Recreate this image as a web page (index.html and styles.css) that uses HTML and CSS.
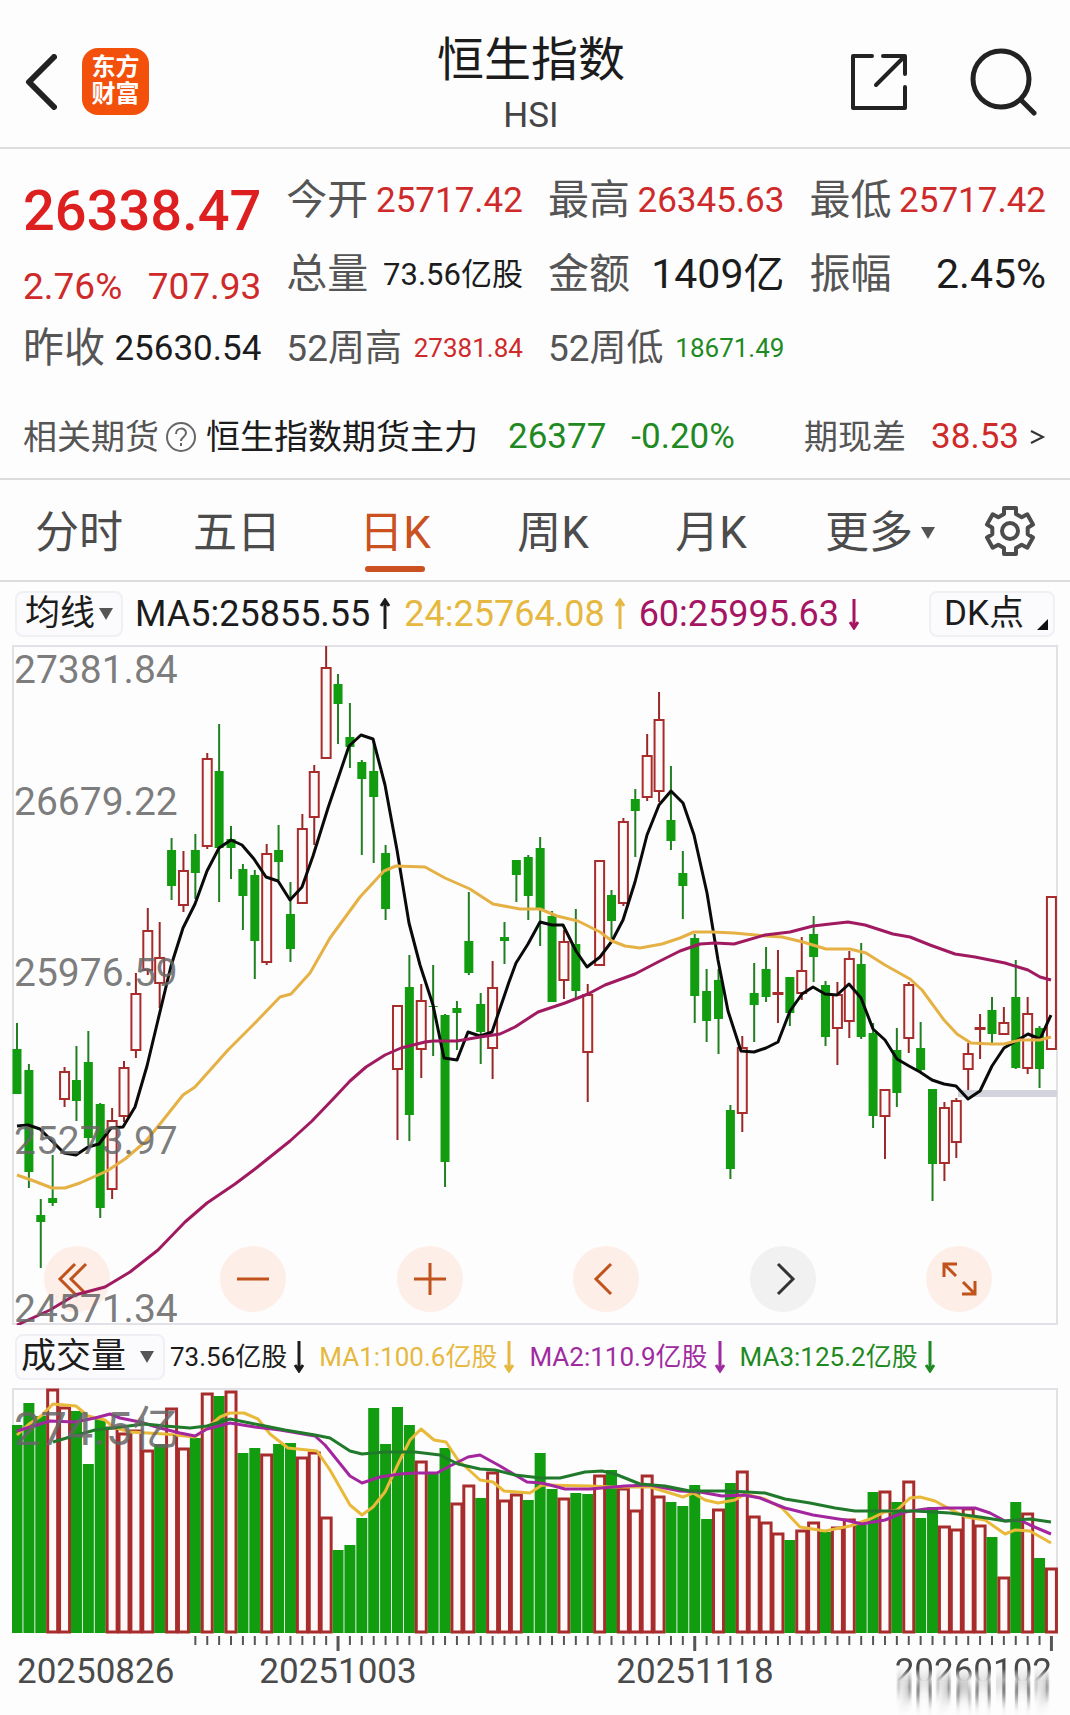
FILE: index.html
```html
<!DOCTYPE html>
<html lang="zh-CN">

<head>
    <meta charset="UTF-8">
    <meta name="viewport" content="width=device-width, initial-scale=1.0">
    <title>恒生指数 HSI</title>
    <link rel="stylesheet" href="styles.css">
</head>

<body>

    <header class="header">
        <div class="header-left">
            <button class="icon-btn" aria-label="返回">
                <svg width="32" height="56" viewBox="0 0 32 56"><path d="M29 3 4 28 29 53" fill="none" stroke="#222" stroke-width="6" stroke-linecap="round" stroke-linejoin="round" /></svg>
            </button>
            <a class="logo" href="#">东方<br>财富</a>
        </div>
        <div class="title">
            <h1>恒生指数</h1>
            <p>HSI</p>
        </div>
        <div class="header-right">
            <button class="icon-btn" aria-label="分享">
                <svg width="58" height="58" viewBox="0 0 58 58" fill="none" stroke="#222" stroke-width="4" stroke-linecap="round" stroke-linejoin="round">
                    <path d="M22 3H3v52h52V34" />
                    <path d="M33 3h22v18M54 4 26 32" />
                </svg>
            </button>
            <button class="icon-btn" aria-label="搜索">
                <svg width="68" height="68" viewBox="0 0 68 68" fill="none" stroke="#222" stroke-width="5" stroke-linecap="round">
                    <circle cx="32" cy="31" r="28" />
                    <path d="m53 53 12 12" />
                </svg>
            </button>
        </div>
    </header>

    <section class="quote">
        <div class="quote-grid">
            <div class="price up">26338.47</div>
            <div class="cell"><span class="label">今开</span><span class="num up">25717.42</span></div>
            <div class="cell"><span class="label">最高</span><span class="num up">26345.63</span></div>
            <div class="cell"><span class="label">最低</span><span class="num up">25717.42</span></div>

            <div class="cell change up"><span>2.76%</span><span>707.93</span></div>
            <div class="cell"><span class="label">总量</span><span class="num mid">73.56亿股</span></div>
            <div class="cell"><span class="label">金额</span><span class="num big">1409亿</span></div>
            <div class="cell"><span class="label">振幅</span><span class="num big">2.45%</span></div>

            <div class="cell"><span class="label">昨收</span><span class="num">25630.54</span></div>
            <div class="cell"><span class="label range">52周高</span><span class="num small up">27381.84</span></div>
            <div class="cell"><span class="label range">52周低</span><span class="num small down">18671.49</span></div>
        </div>
        <a class="futures" href="#">
            <span class="grey">相关期货</span>
            <svg width="32" height="32" viewBox="0 0 32 32" fill="none" stroke="#666" stroke-width="2">
                <circle cx="16" cy="16" r="14" />
                <path d="M11 13c0-7 10-7 10-1 0 4-5 4-5 8M16 22v3" />
            </svg>
            <span class="name">恒生指数期货主力</span>
            <span class="down">26377</span>
            <span class="down pct">-0.20%</span>
            <span class="grey diff">期现差</span>
            <span class="up">38.53</span>
            <svg class="more" width="17" height="20" viewBox="0 0 17 20"><path d="M2 4 14 10 2 16" fill="none" stroke="#333" stroke-width="2" /></svg>
        </a>
    </section>

    <nav class="tabs">
        <button>分时</button>
        <button>五日</button>
        <button class="active">日K</button>
        <button>周K</button>
        <button>月K</button>
        <button>更多<i class="caret"></i></button>
        <button class="settings" aria-label="设置">
            <svg width="52" height="52" viewBox="-26 -26 52 52" fill="none" stroke="#4c4c4c" stroke-width="4" stroke-linejoin="round">
                <path d="M-6-17V-23H6V-17L11.7-13.7 17.3-16.7 23-6.5 17.7-3.3V3.3L23 6.5 17.3 16.7 11.7 13.7 6 17V23H-6V17L-11.7 13.7-17.3 16.7-23 6.5-17.7 3.3V-3.3L-23-6.5-17.3-16.7-11.7-13.7Z" />
                <circle r="8" />
            </svg>
        </button>
    </nav>

    <div class="legend">
        <button class="box">均线<i class="caret"></i></button>
        <span class="item">MA5:25855.55<svg class="arrow" viewBox="0 0 14 32"><path d="M7 31V3M3 8 7 2l4 6" /></svg></span>
        <span class="item yellow">24:25764.08<svg class="arrow" viewBox="0 0 14 32"><path d="M7 31V3M3 8 7 2l4 6" /></svg></span>
        <span class="item crimson">60:25995.63<svg class="arrow" viewBox="0 0 14 32"><path d="M7 1v28M3 24l4 6 4-6" /></svg></span>
        <button class="box dk">DK点<i class="corner"></i></button>
    </div>

    <div class="chart">
        <div class="tools">
            <button aria-label="最早"><svg viewBox="0 0 66 66"><path d="M31 18 16 33l15 15M42 18 27 33l15 15" /></svg></button>
            <button aria-label="缩小"><svg viewBox="0 0 66 66"><path d="M17 33h32" /></svg></button>
            <button aria-label="放大"><svg viewBox="0 0 66 66"><path d="M17 33h32M33 17v32" /></svg></button>
            <button aria-label="左移"><svg viewBox="0 0 66 66"><path d="M38 18 23 33l15 15" /></svg></button>
            <button class="off" aria-label="右移"><svg viewBox="0 0 66 66"><path d="M28 18 43 33 28 48" /></svg></button>
            <button aria-label="全屏"><svg viewBox="0 0 66 66"><path d="M31 18H18v13M18 18l12 12M36 48h13V35M49 48 37 36" /></svg></button>
        </div>
        <svg id="kline" viewBox="12 645 1046 680" role="img" aria-label="日K线"></svg>
    </div>

    <div class="legend volume-legend">
        <button class="box">成交量<i class="caret"></i></button>
        <span class="item">73.56亿股<svg class="arrow" viewBox="0 0 14 32"><path d="M7 0v28M3 24l4 6 4-6" /></svg></span>
        <span class="item yellow">MA1:100.6亿股<svg class="arrow" viewBox="0 0 14 32"><path d="M7 0v28M3 24l4 6 4-6" /></svg></span>
        <span class="item purple">MA2:110.9亿股<svg class="arrow" viewBox="0 0 14 32"><path d="M7 0v28M3 24l4 6 4-6" /></svg></span>
        <span class="item down">MA3:125.2亿股<svg class="arrow" viewBox="0 0 14 32"><path d="M7 0v28M3 24l4 6 4-6" /></svg></span>
    </div>

    <div class="chart">
        <svg id="volume" viewBox="12 1388 1046 327" role="img" aria-label="成交量"></svg>
    </div>

    <script src="chart.js"></script>
</body>

</html>
```
FILE: styles.css
```css
* {
    box-sizing: border-box;
}

body {
    margin: 0;
    background-color: #fdfdfe;
    color: #1c1c1c;
    font-family: Roboto, "Noto Sans CJK SC", sans-serif;
    font-size: 35px;
    line-height: 1;
}

button {
    padding: 0;
    border: none;
    background: none;
    color: inherit;
    font: inherit;
    cursor: pointer;
}

a {
    color: inherit;
    text-decoration: none;
}

svg {
    display: block;
}

.up {
    color: #cf2a2a;
}

.down {
    color: #1f8a22;
}

.yellow {
    color: #e6b840;
}

.crimson {
    color: #a51563;
}

.purple {
    color: #a02ba0;
}

/* header */
.header {
    display: grid;
    grid-template-columns: 1fr auto 1fr;
    align-items: center;
    height: 149px;
    padding: 16px 33px 0 25px;
    border-bottom: 2px solid #dcdcdc;
}

.header-left,
.header-right {
    display: flex;
    align-items: center;
    gap: 25px;
}

.header-right {
    justify-content: flex-end;
    gap: 61px;
}

.logo {
    width: 67px;
    height: 67px;
    padding-top: 6px;
    border-radius: 16px;
    background-color: #f3500c;
    color: #fff;
    font-size: 24px;
    font-weight: 700;
    line-height: 27px;
    text-align: center;
}

.title {
    padding-top: 8px;
    text-align: center;
}

.title h1 {
    margin: 0;
    font-size: 47px;
    font-weight: 400;
    line-height: 56px;
}

.title p {
    margin: 4px 0 0;
    color: #444;
    font-size: 35px;
    line-height: 48px;
}

/* quote */
.quote {
    padding: 14px 24px 0 23px;
    border-bottom: 2px solid #dcdcdc;
}

.quote-grid {
    display: grid;
    grid-template-columns: repeat(4, 1fr);
    grid-auto-rows: 74px;
    column-gap: 25px;
}

.cell {
    display: flex;
    align-items: center;
    justify-content: space-between;
    white-space: nowrap;
}

.price {
    padding-top: 20px;
    color: #dd1f1f;
    font-size: 56px;
    font-weight: 500;
}

.change {
    padding-top: 24px;
    font-size: 37px;
}

.label {
    color: #555;
    font-size: 41px;
}

.range {
    font-size: 37px;
}

.mid {
    font-size: 31px;
}

.big {
    font-size: 41px;
}

.small {
    font-size: 26px;
}

.futures {
    display: flex;
    align-items: center;
    height: 93px;
    padding-top: 10px;
    white-space: nowrap;
}

.grey {
    color: #555;
}

.futures .grey,
.name {
    font-size: 34px;
}

.futures svg {
    margin: 0 9px 0 6px;
}

.name {
    margin-right: 30px;
}

.pct,
.diff {
    margin-right: 25px;
}

.pct {
    margin-left: 25px;
}

.diff {
    margin-left: auto;
}

.futures .more {
    margin: 0 0 0 10px;
}

/* period tabs */
.tabs {
    display: grid;
    grid-template-columns: repeat(5, 158fr) 180fr 80fr;
    height: 102px;
    padding-right: 20px;
    border-bottom: 2px solid #dcdcdc;
    color: #4c4c4c;
    font-size: 44px;
}

.tabs button {
    display: flex;
    align-items: center;
    justify-content: center;
    position: relative;
    padding-top: 6px;
}

.tabs .settings {
    padding-top: 2px;
}

.tabs .active {
    color: #cb5120;
}

.tabs .active::after {
    content: "";
    position: absolute;
    bottom: 8px;
    width: 60px;
    height: 6px;
    border-radius: 3px;
    background-color: #cb5120;
}

.caret {
    flex: none;
    margin-left: 8px;
    border: 7px solid transparent;
    border-top: 12px solid #555;
    border-bottom: none;
}

/* legends over the charts */
.legend {
    display: flex;
    align-items: center;
    gap: 12px;
    height: 63px;
    padding: 0 15px;
    font-size: 36px;
    white-space: nowrap;
}

.box {
    display: flex;
    align-items: center;
    position: relative;
    height: 46px;
    padding: 0 8px;
    border: 2px solid #eff0f3;
    border-radius: 8px;
    background-color: #fbfbfd;
    font-size: 35px;
}

.box .caret {
    margin-left: 4px;
}

.dk {
    width: 126px;
    margin-left: auto;
    padding-left: 13px;
}

.corner {
    position: absolute;
    right: 5px;
    bottom: 5px;
    border-left: 11px solid transparent;
    border-bottom: 11px solid #111;
}

.item {
    display: flex;
    align-items: center;
    gap: 8px;
}

.arrow {
    width: 14px;
    height: 32px;
    fill: none;
    stroke: currentColor;
    stroke-width: 3;
}

.volume-legend {
    gap: 13px;
    font-size: 26px;
}

.volume-legend .box {
    width: 150px;
    margin-right: -8px;
    padding: 0 4px;
}

.volume-legend .box .caret {
    margin-left: 14px;
}

.volume-legend .item {
    gap: 5px;
}

/* charts */
.chart {
    position: relative;
    padding: 0 12px;
}

.chart > svg {
    position: relative;
    width: 100%;
    height: auto;
    pointer-events: none;
}

.tools {
    display: flex;
    justify-content: space-between;
    position: absolute;
    right: 78px;
    bottom: 13px;
    left: 44px;
}

.tools button {
    width: 66px;
    height: 66px;
    border-radius: 50%;
    background-color: #feeee8;
}

.tools svg {
    fill: none;
    stroke: #c0521c;
    stroke-width: 3;
}

.tools .off {
    background-color: #f1f1f1;
}

.tools .off svg {
    stroke: #333;
}

.frame {
    fill: none;
    stroke: #e2e2e6;
    stroke-width: 2;
}

.green-body {
    fill: #129c10;
}

.green-wick {
    stroke: #217f21;
    stroke-width: 2;
}

.red-body {
    fill: #fffafa;
    stroke: #a82c2c;
    stroke-width: 2;
}

.volume-bar {
    stroke-width: 3;
}

.red-wick {
    stroke: #982828;
    stroke-width: 2;
}

.line {
    fill: none;
    stroke-width: 3;
    stroke-linejoin: round;
}

.axis-text {
    fill: #666;
    fill-opacity: 0.85;
    font-size: 39px;
}

.volume-max {
    font-size: 47px;
}

.date {
    fill: #4a4a4a;
    font-size: 35px;
}

.tick {
    stroke: #555;
    stroke-width: 2;
}

.long {
    stroke-width: 3;
}
```
FILE: chart.js
```js
const START = 17;
const STEP = 11.89;

// type, high, body top, body bottom, low
const candles = [
    ['g', 1023, 1049, 1094, 1094], ['g', 1064, 1070, 1172, 1188], ['g', 1199, 1215, 1222, 1268], ['g', 1155, 1198, 1203, 1206],
    ['r', 1067, 1072, 1099, 1107], ['g', 1046, 1080, 1101, 1121], ['g', 1031, 1062, 1138, 1145], ['g', 1103, 1104, 1208, 1218],
    ['r', 1108, 1121, 1189, 1199], ['r', 1061, 1068, 1116, 1122], ['r', 973, 994, 1050, 1058], ['r', 908, 931, 970, 975],
    ['r', 922, 958, 983, 1008], ['g', 838, 850, 886, 900], ['r', 851, 871, 905, 912], ['g', 834, 850, 873, 899],
    ['r', 753, 759, 846, 849], ['g', 724, 771, 848, 902], ['g', 826, 839, 848, 879], ['g', 864, 869, 896, 930],
    ['g', 870, 875, 941, 979], ['r', 844, 854, 962, 965], ['g', 825, 850, 862, 880], ['g', 882, 914, 949, 962],
    ['r', 814, 829, 903, 903], ['r', 765, 772, 817, 845], ['r', 646, 668, 758, 758], ['g', 674, 684, 704, 744],
    ['g', 703, 737, 747, 768], ['g', 760, 762, 779, 855], ['g', 742, 771, 797, 863], ['g', 845, 853, 909, 920],
    ['r', 1006, 1006, 1069, 1140], ['g', 955, 987, 1115, 1141], ['r', 984, 1001, 1049, 1078], ['g', 965, 1006, 1007, 1056],
    ['g', 1014, 1015, 1162, 1187], ['g', 1001, 1008, 1013, 1050], ['g', 892, 941, 973, 975], ['g', 993, 1004, 1032, 1064],
    ['r', 961, 988, 1048, 1079], ['g', 922, 937, 941, 964], ['g', 860, 860, 875, 902], ['g', 855, 857, 896, 920],
    ['g', 837, 848, 909, 946], ['g', 911, 916, 1002, 1002], ['r', 930, 942, 980, 999], ['g', 909, 944, 991, 1000],
    ['r', 984, 995, 1052, 1102], ['r', 861, 861, 965, 965], ['g', 890, 895, 921, 940], ['r', 818, 822, 903, 906],
    ['g', 789, 799, 811, 857], ['r', 734, 756, 797, 801], ['r', 692, 720, 791, 802], ['g', 766, 820, 841, 850],
    ['g', 851, 873, 886, 919], ['g', 934, 938, 996, 1023], ['g', 969, 991, 1021, 1042], ['g', 969, 980, 1019, 1054],
    ['g', 1105, 1110, 1169, 1179], ['r', 1036, 1048, 1113, 1132], ['g', 963, 993, 1005, 1042], ['g', 947, 969, 997, 1002],
    ['r', 950, 993, 994, 1023], ['g', 977, 977, 1013, 1026], ['r', 937, 971, 993, 1000], ['g', 916, 934, 957, 982],
    ['g', 981, 985, 1037, 1046], ['r', 982, 995, 1028, 1065], ['r', 951, 959, 1021, 1038], ['g', 943, 964, 1037, 1039],
    ['g', 1023, 1033, 1116, 1128], ['r', 1090, 1090, 1116, 1159], ['g', 1028, 1050, 1093, 1107], ['r', 982, 985, 1038, 1053],
    ['g', 1022, 1048, 1070, 1073], ['g', 1089, 1089, 1164, 1201], ['r', 1102, 1108, 1163, 1181], ['r', 1098, 1101, 1142, 1158],
    ['r', 1043, 1054, 1069, 1090], ['r', 1014, 1028, 1029, 1059], ['g', 997, 1010, 1034, 1045], ['r', 1007, 1023, 1034, 1034],
    ['g', 960, 997, 1068, 1069], ['r', 997, 1014, 1068, 1074], ['g', 1026, 1028, 1069, 1088], ['r', 897, 897, 1049, 1049]
];

// top of each volume bar, same order as the candles
const volumes = [
    'g1425', 'g1403', 'g1416', 'r1389', 'r1407', 'g1411', 'g1464', 'g1419', 'r1427', 'r1433', 'r1430',
    'r1450', 'g1444', 'r1408', 'r1448', 'g1438', 'r1393', 'g1396', 'r1391', 'g1453', 'g1448', 'r1454',
    'g1444', 'g1443', 'r1457', 'r1452', 'r1517', 'g1550', 'g1545', 'g1518', 'g1408', 'g1444', 'g1407',
    'g1425', 'r1461', 'g1472', 'g1448', 'r1503', 'r1485', 'g1498', 'r1472', 'r1500', 'r1494', 'g1500',
    'g1453', 'g1489', 'r1498', 'g1493', 'g1494', 'r1475', 'g1470', 'r1488', 'r1510', 'r1475', 'r1496',
    'g1502', 'g1506', 'g1485', 'g1519', 'r1509', 'g1483', 'r1471', 'r1516', 'r1522', 'r1533', 'g1540',
    'r1530', 'r1522', 'g1532', 'r1527', 'r1519', 'g1525', 'g1492', 'r1491', 'g1502', 'r1481', 'g1518',
    'g1507', 'r1526', 'r1529', 'r1508', 'r1525', 'g1537', 'r1577', 'g1502', 'r1513', 'g1558', 'r1568'
];

const ma5 = '17,1126 28,1125 40,1129 52,1141 64,1153 76,1155 88,1147 99,1144 111,1128 123,1127 135,1107 147,1066 158,1020 171,966 183,928 195,904 207,871 219,848 231,840 242,845 254,859 266,877 278,881 290,900 302,887 313,856 328,808 349,746 361,735 373,739 385,785 397,850 409,923 420,965 433,1005 444,1058 457,1060 468,1032 480,1036 492,1032 509,982 516,963 528,944 540,922 552,925 563,925 576,951 587,967 600,957 612,941 623,920 635,882 647,835 659,805 671,791 683,803 694,835 707,893 718,960 728,1011 741,1051 754,1052 766,1048 778,1042 790,1011 802,994 813,987 825,994 837,995 849,984 861,998 873,1029 885,1040 897,1059 909,1066 920,1072 932,1080 944,1084 956,1086 968,1099 980,1091 992,1066 1004,1048 1016,1041 1028,1034 1040,1039 1051,1015';
const ma24 = '17,1175 34,1181 52,1188 65,1188 80,1183 107,1171 125,1159 145,1142 160,1124 183,1095 195,1087 228,1050 255,1023 280,997 291,994 310,973 330,938 360,897 384,871 396,866 425,867 445,878 470,889 493,904 520,909 540,909 557,916 578,921 600,932 612,941 625,946 640,948 662,944 680,938 694,932 712,932 734,933 766,936 782,937 803,942 826,949 850,949 866,953 885,965 910,979 922,990 944,1020 957,1034 971,1043 992,1044 1004,1044 1020,1040 1040,1040 1051,1037';
const ma60 = '17,1325 50,1310 75,1295 105,1287 130,1272 158,1250 185,1222 207,1203 235,1184 255,1169 290,1141 312,1121 335,1097 350,1081 366,1067 385,1055 401,1048 425,1042 433,1041 457,1041 480,1037 500,1034 515,1027 538,1012 565,1003 588,994 605,985 635,974 658,962 680,951 700,944 715,943 734,944 765,935 790,932 813,926 830,924 848,922 865,925 893,934 910,937 930,945 955,954 975,957 1005,963 1028,970 1040,977 1051,980';

const vol1 = '17,1435 29,1424 41,1416 53,1404 76,1406 88,1416 105,1420 113,1427 130,1432 165,1434 195,1437 207,1428 220,1417 230,1413 244,1413 258,1419 270,1434 288,1448 317,1451 330,1470 350,1505 362,1515 373,1507 385,1492 400,1460 410,1440 421,1429 434,1440 446,1442 458,1460 480,1480 493,1482 504,1491 530,1493 542,1485 590,1486 612,1487 650,1487 670,1493 683,1497 693,1493 705,1500 718,1503 735,1500 745,1494 765,1499 782,1508 800,1527 825,1531 850,1526 870,1519 885,1512 897,1510 910,1498 920,1497 935,1501 948,1508 966,1517 985,1520 1005,1534 1015,1530 1030,1531 1051,1543';
const vol2 = '17,1431 50,1421 75,1422 95,1418 110,1414 120,1418 140,1422 160,1428 180,1433 195,1436 207,1429 230,1423 255,1427 280,1430 315,1436 325,1445 350,1476 362,1483 380,1477 400,1474 415,1473 437,1473 450,1466 468,1457 480,1455 500,1466 527,1482 541,1483 550,1485 565,1489 590,1489 625,1486 650,1485 680,1491 700,1492 722,1496 744,1495 760,1498 785,1508 813,1515 845,1520 862,1524 885,1520 905,1512 925,1509 945,1508 975,1508 990,1513 1005,1521 1020,1520 1030,1525 1051,1534';
const vol3 = '53,1442 70,1437 95,1430 112,1428 145,1424 165,1426 190,1428 207,1426 230,1419 250,1423 285,1430 315,1435 330,1438 350,1451 362,1454 385,1452 415,1452 440,1455 458,1464 480,1469 495,1470 515,1475 541,1478 560,1478 585,1472 602,1471 615,1474 640,1484 665,1486 690,1491 730,1491 765,1493 785,1499 810,1503 835,1508 855,1511 885,1511 915,1511 950,1513 980,1517 1005,1521 1030,1519 1051,1522';

function line(points, color) {
    return `<polyline class="line" points="${points}" stroke="${color}"/>`;
}

function text(cls, x, y, value, extra = '') {
    return `<text class="${cls}" x="${x}" y="${y}" ${extra}>${value}</text>`;
}

// price chart
let html = '<rect class="frame" x="13" y="646" width="1044" height="678"/>';
html += '<rect x="958" y="1090" width="99" height="7" fill="#d2d3dc"/>';

candles.forEach(([type, high, top, bottom, low], i) => {
    const x = START + i * STEP;
    if (type === 'g') {
        html += `<line class="green-wick" x1="${x}" x2="${x}" y1="${high}" y2="${low}"/>`;
        html += `<rect class="green-body" x="${x - 4.5}" y="${top}" width="9" height="${bottom - top}"/>`;
    } else {
        html += `<line class="red-wick" x1="${x}" x2="${x}" y1="${high}" y2="${top}"/>`;
        html += `<line class="red-wick" x1="${x}" x2="${x}" y1="${bottom}" y2="${low}"/>`;
        html += `<rect class="red-body" x="${x - 4.5}" y="${top}" width="9" height="${bottom - top}"/>`;
    }
});

html += line(ma5, '#0a0a0a') + line(ma24, '#e6b144') + line(ma60, '#a01a60');
html += text('axis-text', 14, 683, '27381.84');
html += text('axis-text', 14, 815, '26679.22');
html += text('axis-text', 14, 986, '25976.59');
html += text('axis-text', 14, 1154, '25273.97');
html += text('axis-text', 14, 1322, '24571.34');
document.getElementById('kline').innerHTML = html;

// volume chart
html = `<defs>
    <linearGradient id="fade" gradientUnits="userSpaceOnUse" x1="0" y1="1655" x2="0" y2="1690">
        <stop offset="0.4" stop-color="#4a4a4a"/>
        <stop offset="0.75" stop-color="#4a4a4a" stop-opacity="0"/>
    </linearGradient>
    <filter id="smear" filterUnits="userSpaceOnUse" x="880" y="1640" width="178" height="75">
        <feGaussianBlur in="SourceGraphic" stdDeviation="0 8"/>
        <feOffset dy="22" result="trail"/>
        <feMerge><feMergeNode in="trail"/><feMergeNode in="SourceGraphic"/></feMerge>
    </filter>
</defs>`;
html += '<path class="frame" d="M13 1633V1389H1057V1633"/>';

volumes.forEach((bar, i) => {
    const x = START + i * STEP;
    const top = Number(bar.slice(1));
    if (bar[0] === 'g') {
        html += `<rect class="green-body" x="${x - 5.5}" y="${top}" width="11" height="${1633 - top}"/>`;
    } else {
        html += `<rect class="red-body volume-bar" x="${x - 5}" y="${top + 1}" width="10" height="${1631 - top}"/>`;
    }
});

html += line(vol1, '#e9b93a') + line(vol2, '#a3269f') + line(vol3, '#217a2b');
html += text('axis-text volume-max', 14, 1445, '274.5亿');

// ticks start where the first date label ends
for (let i = 15; i < candles.length; i++) {
    const x = START + i * STEP;
    const long = i === 27 || i === 57 || i === 87;
    html += `<line class="tick ${long ? 'long' : ''}" x1="${x}" x2="${x}" y1="1636" y2="${long ? 1651 : 1645}"/>`;
}

html += text('date', 17, 1683, '20250826');
html += text('date', 338, 1683, '20251003', 'text-anchor="middle"');
html += text('date', 695, 1683, '20251118', 'text-anchor="middle"');
html += text('date', 1052, 1683, '20260102', 'text-anchor="end" style="fill: url(#fade)" filter="url(#smear)"');
document.getElementById('volume').innerHTML = html;
```
